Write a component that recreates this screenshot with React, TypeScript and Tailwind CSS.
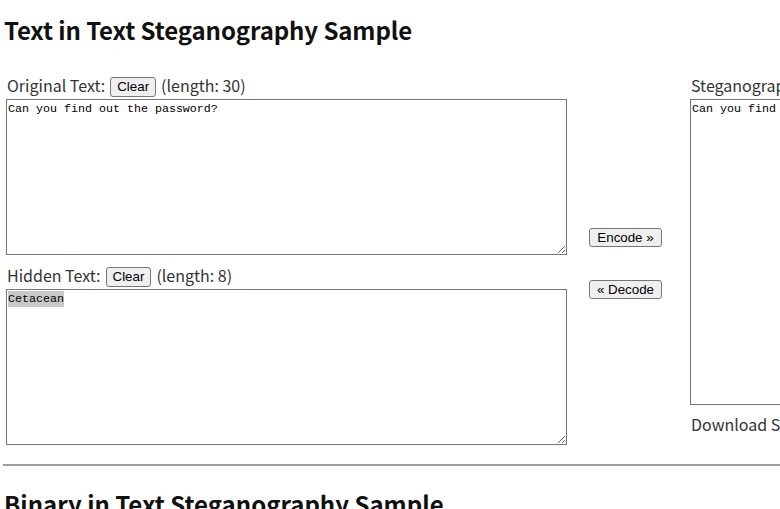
import { useState } from "react";

const ui = "font-['Noto_Sans_CJK_JP','Noto_Sans',sans-serif]";
const mono = "font-['Liberation_Mono',monospace] text-[11.67px] leading-[13px]";
const btn = "font-['Liberation_Sans',Arial,sans-serif] text-[13.33px] leading-[16px] bg-[#efefef] border border-[#767676] rounded-[3px] px-[6px] py-[1px] text-black";

export default function App() {
	const [original, setOriginal] = useState("Can you find out the password?");
	const [hidden, setHidden] = useState("Cetacean");
	const [stego] = useState("Can you find out the password?");

	return (
		<div className={`${ui} bg-white text-[#333] w-[780px] h-[509px] overflow-hidden`}>
			<div className="w-[1100px] px-[3px]">
				<h2 className="text-[24px] leading-[36px] font-bold text-[#111] pt-[12px] pl-[1px] tracking-[-0.1px]">Text in Text Steganography Sample</h2>

				<div className="flex mt-[26px]">
					<div className="flex flex-col w-[564px] pl-[3px]">
						<div className="flex items-center gap-[5px] h-[25px] text-[16px] pl-[1px]">
							<span className="mb-[3px]">Original Text:</span>
							<button className={btn} onClick={() => setOriginal("")}>Clear</button>
							<span className="mb-[3px]">(length: {original.length})</span>
						</div>
						<textarea
							value={original}
							onChange={(e) => setOriginal(e.target.value)}
							className={`${mono} w-[561px] h-[156px] border border-[#767676] px-[1px] pt-[3px] text-black outline-none`}
						/>
						<div className="flex items-center gap-[5px] h-[34px] pt-[9px] text-[16px] pl-[1px]">
							<span className="mb-[3px]">Hidden Text:</span>
							<button className={btn} onClick={() => setHidden("")}>Clear</button>
							<span className="mb-[3px]">(length: {hidden.length})</span>
						</div>
						<div className="relative w-[561px] h-[156px] bg-white">
							<div className={`${mono} absolute inset-0 border border-transparent px-[1px] pt-[3px] text-transparent`}>
								<span className="bg-[#c8c8c8] py-[1px]">{hidden}</span>
							</div>
							<textarea
								value={hidden}
								onChange={(e) => setHidden(e.target.value)}
								className={`${mono} relative w-full h-full bg-transparent border border-[#767676] px-[1px] pt-[3px] text-black outline-none`}
							/>
						</div>
					</div>

					<div className="flex flex-col w-[123px] pl-[22px] pt-[154px]">
						<button className={`${btn} w-[73px] !py-0 h-[19px]`}>Encode »</button>
						<button className={`${btn} w-[73px] !py-0 h-[19px] mt-[33px]`}>« Decode</button>
					</div>

					<div className="flex flex-col">
						<div className="h-[25px] flex items-center text-[16px] pl-[1px]">
							<span className="mb-[3px]">Steganography Text: (length: 38)</span>
						</div>
						<textarea
							value={stego}
							readOnly
							className={`${mono} w-[400px] h-[306px] border border-[#767676] px-[1px] pt-[3px] text-black outline-none`}
						/>
						<div className="text-[16px] pt-[7px] pl-[1px]">Download Steganography Text</div>
					</div>
				</div>

				<hr className="mt-[19px] border-t-[2px] border-[#a0a0a0]" />

				<h2 className="text-[24px] leading-[36px] font-bold text-[#111] pt-[20px] pl-[1px]">Binary in Text Steganography Sample</h2>
			</div>
		</div>
	);
}
